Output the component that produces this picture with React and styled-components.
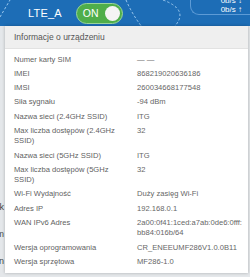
import React from 'react';
import styled, { createGlobalStyle } from 'styled-components';

const GlobalStyle = createGlobalStyle`
  body {
    margin: 0;
    background: #dfe3e7;
    font-family: "Liberation Sans", Arial, sans-serif;
  }
`;

const App = () => {
  return (
    <Page>
      <GlobalStyle />
      <TopBar>
        <Decor width="250" height="26" viewBox="0 0 250 26">
          <path d="M0 17 L10 0" />
          <path d="M126 0 Q132 14 142 27" />
          <path d="M163 0 Q190 10 174 27" />
        </Decor>
        <NetName>LTE_A</NetName>
        <Toggle>
          <span>ON</span>
          <Knob />
        </Toggle>
        <Speed>
          <SpeedLine>0b/s ↓</SpeedLine>
          <SpeedLine>0b/s ↑</SpeedLine>
        </Speed>
      </TopBar>
      <Backdrop>
        {BACK.map((t, idx) => (
          <BackLine key={idx} top={t.top}>{t.text}</BackLine>
        ))}
      </Backdrop>
      <Dialog>
        <DialogHead>Informacje o urządzeniu</DialogHead>
        <Table>
          {ROWS.map((row, idx) => (
            <Row key={idx}>
              <Label>{row[0]}</Label>
              <Value>{row[1]}</Value>
            </Row>
          ))}
        </Table>
      </Dialog>
    </Page>
  );
};

const Page = styled.div`
  position: relative;
  width: 250px;
  height: 277px;
  overflow: hidden;
  background: #e4e7ea;
`;
const TopBar = styled.header`
  position: relative;
  display: flex;
  align-items: center;
  height: 26px;
  padding-left: 28px;
  background: #1d6db6;
  box-sizing: border-box;
`;
const Decor = styled.svg`
  position: absolute;
  left: 0;
  top: 0;
  fill: none;
  stroke: #9cc8ee;
  stroke-width: 1;
  stroke-dasharray: 2.5 2;
`;
const NetName = styled.div`
  position: relative;
  color: #fff;
  font-size: 11px;
  letter-spacing: 0.2px;
`;
const Toggle = styled.div`
  position: relative;
  display: flex;
  align-items: center;
  justify-content: space-between;
  margin-left: 14px;
  width: 47px;
  height: 21px;
  padding: 0 2px 0 6px;
  box-sizing: border-box;
  border: 1.5px solid #9ad69a;
  border-radius: 11px;
  background: #4fae4a;
  color: #fff;
  font-size: 10.5px;
`;
const Knob = styled.div`
  width: 15px;
  height: 15px;
  border-radius: 50%;
  background: #f4f4f4;
`;
const Speed = styled.div`
  position: relative;
  display: flex;
  flex-direction: column;
  align-items: flex-end;
  justify-content: flex-end;
  align-self: flex-start;
  margin-left: auto;
  margin-top: -9px;
  width: 60px;
  height: 24px;
  padding-right: 8px;
  box-sizing: border-box;
  border: 1px solid #5d9bd6;
  border-top: none;
  border-right: none;
  border-radius: 0 0 0 9px;
`;
const SpeedLine = styled.div`
  color: #fff;
  font-size: 8px;
  line-height: 9px;
`;
const Backdrop = styled.div`
  position: relative;
  height: 251px;
`;
const BackLine = styled.div`
  position: absolute;
  top: ${(p) => p.top}px;
  left: -40px;
  width: 44px;
  text-align: right;
  color: #444;
  font-size: 9px;
`;
const Dialog = styled.section`
  position: absolute;
  top: 26px;
  left: 5px;
  width: 243px;
  height: 247px;
  background: #fff;
  box-shadow: 0 0 3px rgba(0, 0, 0, 0.25);
`;
const DialogHead = styled.div`
  display: flex;
  align-items: center;
  height: 22px;
  padding-left: 9px;
  background: #efefef;
  border-bottom: 1px solid #e2e2e2;
  color: #555;
  font-size: 8.5px;
`;
const Table = styled.div`
  padding: 4px 0 0 9px;
`;
const Row = styled.div`
  display: grid;
  grid-template-columns: 110px 1fr;
  column-gap: 13px;
  padding: 1.8px 0;
  font-size: 7.6px;
  line-height: 10.6px;
`;
const Label = styled.div`
  color: #5f5f5f;
`;
const Value = styled.div`
  color: #666;
  white-space: nowrap;
`;

const BACK = [
  { top: 176, text: 'k' },
  { top: 203, text: 'm' },
  { top: 230, text: 'n' },
];

const ROWS = [
  ['Numer karty SIM', '— —'],
  ['IMEI', '868219020636186'],
  ['IMSI', '260034668177548'],
  ['Siła sygnału', '-94 dBm'],
  ['Nazwa sieci (2.4GHz SSID)', 'ITG'],
  ['Max liczba dostępów (2.4GHz SSID)', '32'],
  ['Nazwa sieci (5GHz SSID)', 'ITG'],
  ['Max liczba dostępów (5GHz SSID)', '32'],
  ['Wi-Fi Wydajność', 'Duży zasięg Wi-Fi'],
  ['Adres IP', '192.168.0.1'],
  ['WAN IPv6 Adres', <>2a00:0f41:1ced:a7ab:0de6:0fff:<br />bb84:016b/64</>],
  ['Wersja oprogramowania', 'CR_ENEEUMF286V1.0.0B11'],
  ['Wersja sprzętowa', 'MF286-1.0'],
];

export default App;
